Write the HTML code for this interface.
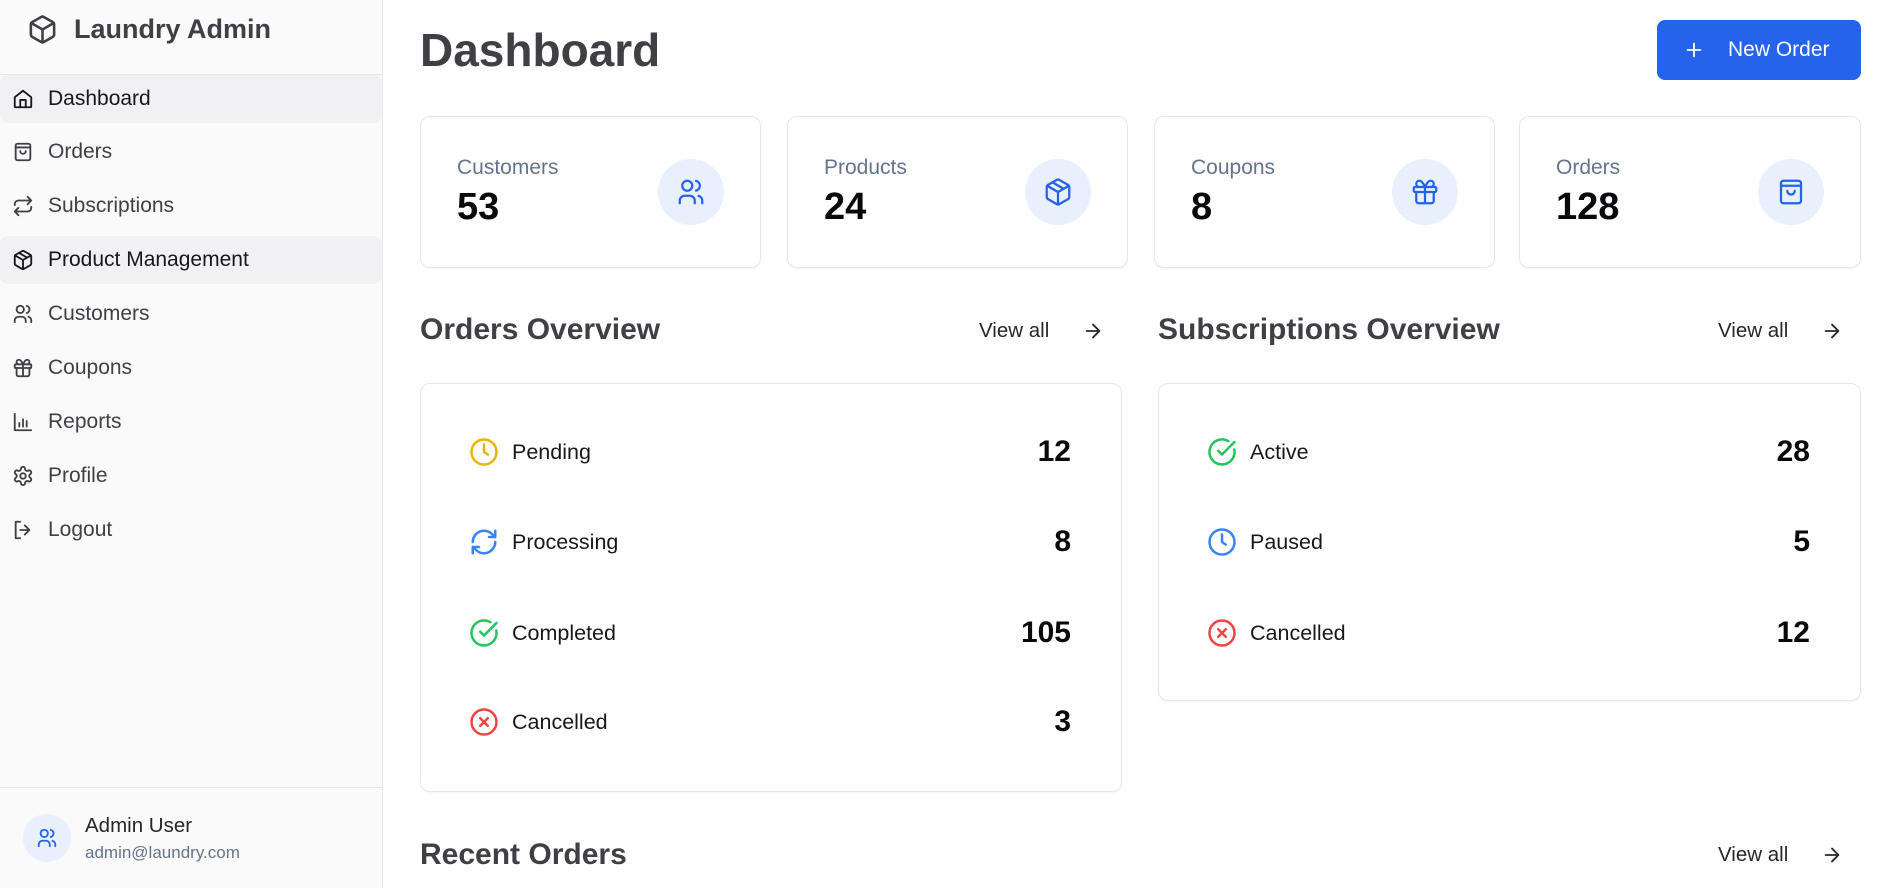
<!DOCTYPE html>
<html><head><meta charset="utf-8"><style>
*{box-sizing:border-box;margin:0;padding:0}
body{width:1898px;height:888px;overflow:hidden;font-family:"Liberation Sans",sans-serif;background:#fff;position:relative;color:#18181b}
.side{position:absolute;left:0;top:0;width:383px;height:888px;background:#fafafa;border-right:1px solid #e5e7eb}
.logo{position:absolute;left:27px;top:12px;height:34px;display:flex;align-items:center;font-size:27px;font-weight:bold;color:#3f3f46}
.logo svg{margin-right:16px}
.hline{position:absolute;left:0;width:382px;height:1px;background:#e5e7eb}
.nav{position:absolute;left:0;width:382px;height:48px;display:flex;align-items:center;font-size:21px;color:#3f3f46;border-radius:8px}
.nav svg{position:absolute;left:12px}
.nav span{position:absolute;left:48px}
.nav.act{background:#f1f1f3;color:#18181b}
svg{fill:none;stroke-linecap:round;stroke-linejoin:round}
.card{position:absolute;border:1px solid #e5e7eb;border-radius:10px;background:#fff;box-shadow:0 1px 2px rgba(0,0,0,.04)}
.lbl{position:absolute;left:36px;top:39px;font-size:21px;color:#64748b}
.val{position:absolute;left:36px;top:69px;font-size:38px;font-weight:bold;color:#09090b}
.ic{position:absolute;right:36px;top:42px;width:66px;height:66px;border-radius:50%;background:#e8effd;display:flex;align-items:center;justify-content:center}
.h2{position:absolute;font-size:30px;font-weight:bold;color:#3f3f46}
.va{position:absolute;font-size:20.5px;color:#27272a}
.row{position:absolute;left:48px;right:50px;height:34px;display:flex;align-items:center}
.row span{margin-left:13px;font-size:21.5px;color:#18181b}
.row b{margin-left:auto;font-size:30px;color:#09090b}
</style></head><body>
<div class="side">
 <div class="logo"><svg width="31" height="33" viewBox="0 0 24 24" stroke="#3f3f46" stroke-width="2"><path d="M21 16V8a2 2 0 0 0-1-1.7l-7-4a2 2 0 0 0-2 0l-7 4A2 2 0 0 0 3 8v8a2 2 0 0 0 1 1.7l7 4a2 2 0 0 0 2 0l7-4a2 2 0 0 0 1-1.7z"/><path d="M3.3 7 12 12l8.7-5M12 22V12"/></svg>Laundry Admin</div>
 <div class="hline" style="top:74px"></div>
 <div class="nav act" style="top:75px"><svg width="22" height="22" viewBox="0 0 24 24" stroke="#18181b" stroke-width="2"><path d="M3 10 12 3l9 7v10a1 1 0 0 1-1 1H4a1 1 0 0 1-1-1z"/><path d="M9 21v-8h6v8"/></svg><span>Dashboard</span></div>
 <div class="nav" style="top:128px"><svg width="22" height="22" viewBox="0 0 24 24" stroke="#3f3f46" stroke-width="2"><rect x="4" y="3" width="16" height="18" rx="2"/><path d="M4 7h16M9 11a3 3 0 0 0 6 0"/></svg><span>Orders</span></div>
 <div class="nav" style="top:182px"><svg width="22" height="22" viewBox="0 0 24 24" stroke="#3f3f46" stroke-width="2"><path d="m17 2 4 4-4 4M3 11V10a4 4 0 0 1 4-4h14M7 22l-4-4 4-4M21 13v1a4 4 0 0 1-4 4H3"/></svg><span>Subscriptions</span></div>
 <div class="nav act" style="top:236px"><svg width="22" height="22" viewBox="0 0 24 24" stroke="#18181b" stroke-width="2"><path d="M21 16V8a2 2 0 0 0-1-1.7l-7-4a2 2 0 0 0-2 0l-7 4A2 2 0 0 0 3 8v8a2 2 0 0 0 1 1.7l7 4a2 2 0 0 0 2 0l7-4a2 2 0 0 0 1-1.7z"/><path d="M3.3 7 12 12l8.7-5M12 22V12M7.5 4.2l9 5.2"/></svg><span>Product Management</span></div>
 <div class="nav" style="top:290px"><svg width="22" height="22" viewBox="0 0 24 24" stroke="#3f3f46" stroke-width="2"><circle cx="9" cy="7" r="4"/><path d="M3 21v-2a4 4 0 0 1 4-4h4a4 4 0 0 1 4 4v2M16 3.1a4 4 0 0 1 0 7.8M21 21v-2a4 4 0 0 0-3-3.9"/></svg><span>Customers</span></div>
 <div class="nav" style="top:344px"><svg width="22" height="22" viewBox="0 0 24 24" stroke="#3f3f46" stroke-width="2"><rect x="3" y="8" width="18" height="4" rx="1"/><path d="M12 8v13M19 12v7a2 2 0 0 1-2 2H7a2 2 0 0 1-2-2v-7M7.5 8a2.5 2.5 0 0 1 0-5C10 3 12 8 12 8s2-5 4.5-5a2.5 2.5 0 0 1 0 5"/></svg><span>Coupons</span></div>
 <div class="nav" style="top:398px"><svg width="22" height="22" viewBox="0 0 24 24" stroke="#3f3f46" stroke-width="2"><path d="M3 3v18h18M8 17v-4M12 17V9M16 17v-6"/></svg><span>Reports</span></div>
 <div class="nav" style="top:452px"><svg width="22" height="22" viewBox="0 0 24 24" stroke="#3f3f46" stroke-width="2"><circle cx="12" cy="12" r="3"/><path d="M12.2 2h-.4a2 2 0 0 0-2 2v.2a2 2 0 0 1-1 1.7l-.4.3a2 2 0 0 1-2 0l-.2-.1a2 2 0 0 0-2.7.7l-.2.4a2 2 0 0 0 .7 2.7l.2.1a2 2 0 0 1 1 1.7v.5a2 2 0 0 1-1 1.7l-.2.1a2 2 0 0 0-.7 2.7l.2.4a2 2 0 0 0 2.7.7l.2-.1a2 2 0 0 1 2 0l.4.3a2 2 0 0 1 1 1.7v.2a2 2 0 0 0 2 2h.4a2 2 0 0 0 2-2v-.2a2 2 0 0 1 1-1.7l.4-.3a2 2 0 0 1 2 0l.2.1a2 2 0 0 0 2.7-.7l.2-.4a2 2 0 0 0-.7-2.7l-.2-.1a2 2 0 0 1-1-1.7v-.5a2 2 0 0 1 1-1.7l.2-.1a2 2 0 0 0 .7-2.7l-.2-.4a2 2 0 0 0-2.7-.7l-.2.1a2 2 0 0 1-2 0l-.4-.3a2 2 0 0 1-1-1.7V4a2 2 0 0 0-2-2z"/></svg><span>Profile</span></div>
 <div class="nav" style="top:506px"><svg width="22" height="22" viewBox="0 0 24 24" stroke="#3f3f46" stroke-width="2"><path d="M9 21H4V3h5M14 17l5-5-5-5M19 12H9"/></svg><span>Logout</span></div>
 <div class="hline" style="top:787px"></div>
 <div style="position:absolute;left:23px;top:814px;width:48px;height:48px;border-radius:50%;background:#e8effd;display:flex;align-items:center;justify-content:center"><svg width="22" height="22" viewBox="0 0 24 24" stroke="#2563eb" stroke-width="2"><circle cx="9" cy="7" r="4"/><path d="M3 21v-2a4 4 0 0 1 4-4h4a4 4 0 0 1 4 4v2M16 3.1a4 4 0 0 1 0 7.8M21 21v-2a4 4 0 0 0-3-3.9"/></svg></div>
 <div style="position:absolute;left:85px;top:814px;font-size:20.5px;color:#27272a">Admin User</div>
 <div style="position:absolute;left:85px;top:843px;font-size:17px;color:#64748b">admin@laundry.com</div>
</div>

<div style="position:absolute;left:420px;top:23px;font-size:46px;font-weight:bold;color:#3f3f46">Dashboard</div>
<div style="position:absolute;left:1657px;top:20px;width:204px;height:60px;background:#2563eb;border-radius:8px;color:#fff;font-size:21px;display:flex;align-items:center"><svg style="position:absolute;left:26px" width="22" height="22" viewBox="0 0 24 24" stroke="#fff" stroke-width="2"><path d="M12 5v14M5 12h14"/></svg><span style="position:absolute;left:71px">New Order</span></div>

<div class="card" style="left:420px;top:116px;width:341px;height:152px"><div class="lbl">Customers</div><div class="val">53</div><div class="ic"><svg width="30" height="30" viewBox="0 0 24 24" stroke="#2563eb" stroke-width="1.8"><circle cx="9" cy="7" r="4"/><path d="M3 21v-2a4 4 0 0 1 4-4h4a4 4 0 0 1 4 4v2M16 3.1a4 4 0 0 1 0 7.8M21 21v-2a4 4 0 0 0-3-3.9"/></svg></div></div>
<div class="card" style="left:787px;top:116px;width:341px;height:152px"><div class="lbl">Products</div><div class="val">24</div><div class="ic"><svg width="30" height="30" viewBox="0 0 24 24" stroke="#2563eb" stroke-width="1.8"><path d="M21 16V8a2 2 0 0 0-1-1.7l-7-4a2 2 0 0 0-2 0l-7 4A2 2 0 0 0 3 8v8a2 2 0 0 0 1 1.7l7 4a2 2 0 0 0 2 0l7-4a2 2 0 0 0 1-1.7z"/><path d="M3.3 7 12 12l8.7-5M12 22V12M7.5 4.2l9 5.2"/></svg></div></div>
<div class="card" style="left:1154px;top:116px;width:341px;height:152px"><div class="lbl">Coupons</div><div class="val">8</div><div class="ic"><svg width="30" height="30" viewBox="0 0 24 24" stroke="#2563eb" stroke-width="1.8"><rect x="3" y="8" width="18" height="4" rx="1"/><path d="M12 8v13M19 12v7a2 2 0 0 1-2 2H7a2 2 0 0 1-2-2v-7M7.5 8a2.5 2.5 0 0 1 0-5C10 3 12 8 12 8s2-5 4.5-5a2.5 2.5 0 0 1 0 5"/></svg></div></div>
<div class="card" style="left:1519px;top:116px;width:342px;height:152px"><div class="lbl">Orders</div><div class="val">128</div><div class="ic"><svg width="30" height="30" viewBox="0 0 24 24" stroke="#2563eb" stroke-width="1.8"><rect x="4" y="3" width="16" height="18" rx="2"/><path d="M4 7h16M9 11a3 3 0 0 0 6 0"/></svg></div></div>

<div class="h2" style="left:420px;top:313px">Orders Overview</div>
<div class="va" style="left:979px;top:319px">View all</div>
<svg style="position:absolute;left:1082px;top:320px" width="22" height="22" viewBox="0 0 24 24" stroke="#27272a" stroke-width="2"><path d="M5 12h14M12 5l7 7-7 7"/></svg>
<div class="h2" style="left:1158px;top:313px">Subscriptions Overview</div>
<div class="va" style="left:1718px;top:319px">View all</div>
<svg style="position:absolute;left:1821px;top:320px" width="22" height="22" viewBox="0 0 24 24" stroke="#27272a" stroke-width="2"><path d="M5 12h14M12 5l7 7-7 7"/></svg>

<div class="card" style="left:420px;top:383px;width:702px;height:409px">
 <div class="row" style="top:51px"><svg width="30" height="30" viewBox="0 0 24 24" stroke="#eab308" stroke-width="2"><circle cx="12" cy="12" r="10"/><path d="M12 6v6l3 2"/></svg><span>Pending</span><b>12</b></div>
 <div class="row" style="top:141px"><svg width="30" height="30" viewBox="0 0 24 24" stroke="#3b82f6" stroke-width="2"><path d="M3 12a9 9 0 0 1 15-6.7L21 8M21 3v5h-5M21 12a9 9 0 0 1-15 6.7L3 16M8 16H3v5"/></svg><span>Processing</span><b>8</b></div>
 <div class="row" style="top:232px"><svg width="30" height="30" viewBox="0 0 24 24" stroke="#22c55e" stroke-width="2"><path d="M21.8 10A10 10 0 1 1 17 3.3"/><path d="m9 11 3 3L22 4"/></svg><span>Completed</span><b>105</b></div>
 <div class="row" style="top:321px"><svg width="30" height="30" viewBox="0 0 24 24" stroke="#ef4444" stroke-width="2"><circle cx="12" cy="12" r="10"/><path d="m15 9-6 6M9 9l6 6"/></svg><span>Cancelled</span><b>3</b></div>
</div>
<div class="card" style="left:1158px;top:383px;width:703px;height:318px">
 <div class="row" style="top:51px"><svg width="30" height="30" viewBox="0 0 24 24" stroke="#22c55e" stroke-width="2"><path d="M21.8 10A10 10 0 1 1 17 3.3"/><path d="m9 11 3 3L22 4"/></svg><span>Active</span><b>28</b></div>
 <div class="row" style="top:141px"><svg width="30" height="30" viewBox="0 0 24 24" stroke="#3b82f6" stroke-width="2"><circle cx="12" cy="12" r="10"/><path d="M12 6v6l3 2"/></svg><span>Paused</span><b>5</b></div>
 <div class="row" style="top:232px"><svg width="30" height="30" viewBox="0 0 24 24" stroke="#ef4444" stroke-width="2"><circle cx="12" cy="12" r="10"/><path d="m15 9-6 6M9 9l6 6"/></svg><span>Cancelled</span><b>12</b></div>
</div>

<div class="h2" style="left:420px;top:838px">Recent Orders</div>
<div class="va" style="left:1718px;top:843px">View all</div>
<svg style="position:absolute;left:1821px;top:844px" width="22" height="22" viewBox="0 0 24 24" stroke="#27272a" stroke-width="2"><path d="M5 12h14M12 5l7 7-7 7"/></svg>
</body></html>
